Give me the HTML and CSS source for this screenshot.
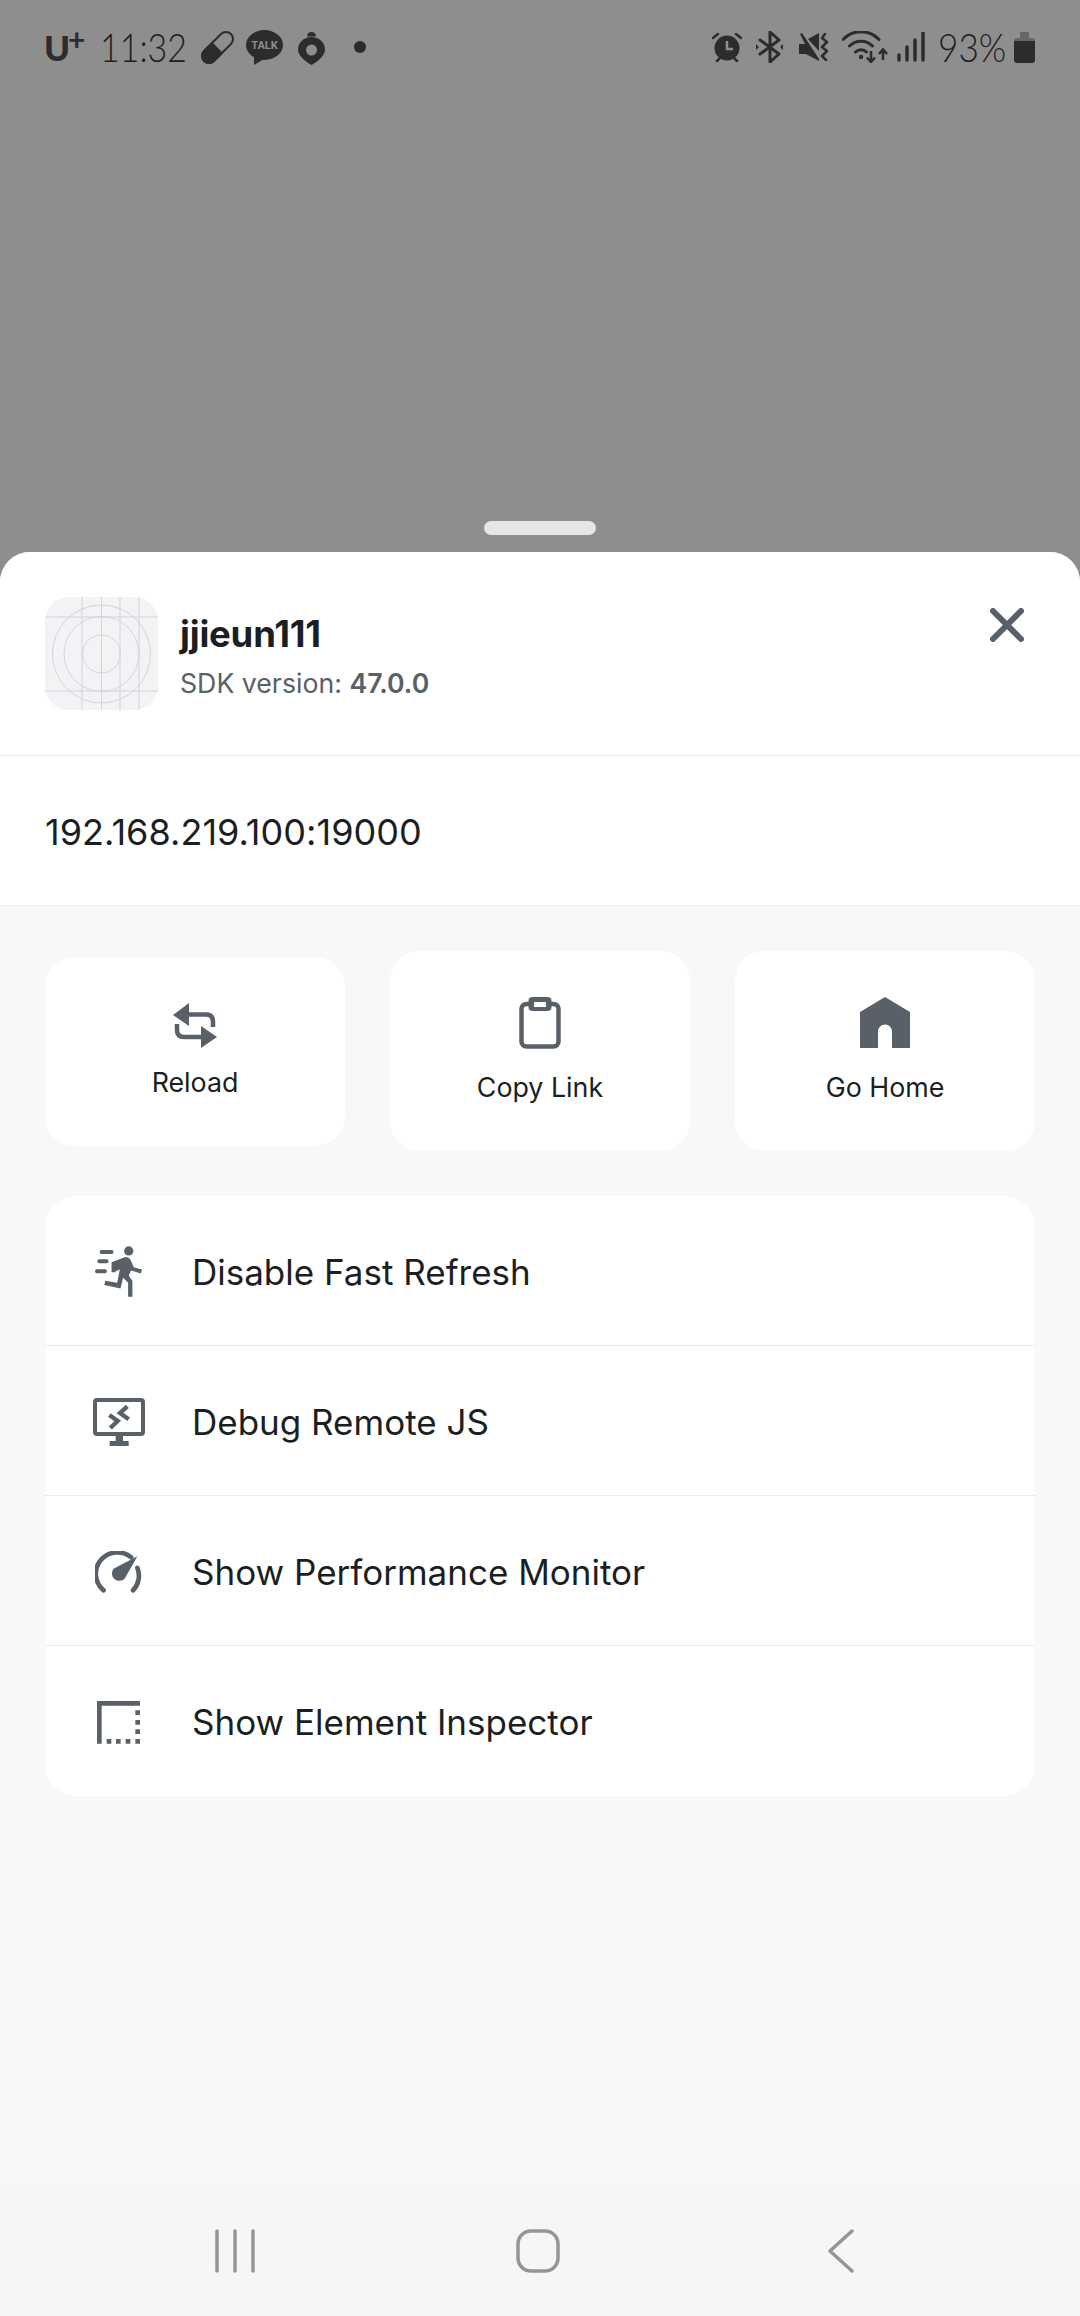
FILE: index.html
```html
<!DOCTYPE html>
<html lang="en">
<head>
  <meta charset="UTF-8">
  <title>jjieun111 - Dev Menu</title>
  <meta name="viewport" content="width=device-width,minimum-scale=1.0,maximum-scale=1.0">
  <link rel="stylesheet" href="styles.css">
</head>
<body>
  <div class="backdrop">
    <div class="status">
      <div class="status-left">
        <span class="carrier">U<sup>+</sup></span>
        <span class="clock">11:32</span>
        <svg class="st st-pill" width="33" height="33" viewBox="0 0 33 33">
          <g transform="rotate(-45 16.5 16.5)">
            <rect x="-2.5" y="9.5" width="38" height="14" rx="7" fill="none" stroke="#2c2c2c" stroke-width="2"/>
            <path d="M16.5 8.5H4.5a8 8 0 0 0 0 16h12z" fill="#2c2c2c"/>
          </g>
        </svg>
        <svg class="st st-talk" width="37" height="35" viewBox="0 0 37 35">
          <ellipse cx="18.5" cy="15" rx="18.5" ry="15" fill="#2c2c2c"/>
          <path d="M8 25l0 10 10-6z" fill="#2c2c2c"/>
          <text x="18.5" y="19" class="talk-text" text-anchor="middle">TALK</text>
        </svg>
        <svg class="st st-timer" width="27" height="35" viewBox="0 0 27 35">
          <path d="M9 6.5a4.500 4.500 0 0 1 9 0z" fill="#2c2c2c"/>
          <path d="M13.500 7C21 7 27 12.500 27 19.500 27 26 19 32 13.500 35 8 32 0 26 0 19.500 0 12.500 6 7 13.500 7z" fill="#2c2c2c"/>
          <circle cx="13.500" cy="20" r="5.500" fill="#8e8e8e"/>
        </svg>
        <span class="dot"></span>
      </div>
      <div class="status-right">
        <svg class="st st-alarm" width="30" height="30" viewBox="0 0 30 30">
          <circle cx="15" cy="16" r="12.500" fill="#2c2c2c"/>
          <path d="M1 6l5-4M29 6l-5-4M5 29l3-3M25 29l-3-3" stroke="#2c2c2c" stroke-width="2.500" stroke-linecap="round"/>
          <path d="M15 9v8h6" fill="none" stroke="#8e8e8e" stroke-width="2.500"/>
        </svg>
        <svg class="st st-bt" width="27" height="32" viewBox="0 0 27 32">
          <path d="M4 9l19 14-9 8V1l9 8L4 23" fill="none" stroke="#2c2c2c" stroke-width="3" stroke-linejoin="round" stroke-linecap="round"/>
          <path d="M0 13l3 3-3 3zM27 13l-3 3 3 3z" fill="#2c2c2c"/>
        </svg>
        <svg class="st st-mute" width="30" height="28" viewBox="0 0 30 28">
          <path d="M0 11h6l-5-10 2-1 17 26v2L7 21H0zM9 6l11-6v18z" fill="#2c2c2c"/>
          <path d="M26 1l-3 4 5 4-5 5 5 4-5 5 4 4" fill="none" stroke="#2c2c2c" stroke-width="2.500" stroke-linecap="round" stroke-linejoin="round"/>
        </svg>
        <svg class="st st-wifi" width="46" height="32" viewBox="0 0 46 32">
          <path d="M1 8.500C11-2 27-2 37 8.500M7.500 15C14 8.500 24 8.500 30.500 15M13.500 21c3-3 8-3 11 0" fill="none" stroke="#2c2c2c" stroke-width="3" stroke-linecap="round"/>
          <circle cx="19" cy="26" r="2.200" fill="#2c2c2c"/>
          <path d="M29 20v10M25 26.500l4 4.500 4-4.500M41 29V19M37 23l4-4.500 4 4.500" fill="none" stroke="#2c2c2c" stroke-width="2.500"/>
        </svg>
        <svg class="st st-signal" width="28" height="30" viewBox="0 0 28 30">
          <path d="M2 23v5M10 15v13M18 8v20M26 1v27" stroke="#2c2c2c" stroke-width="3.500" stroke-linecap="round"/>
        </svg>
        <span class="battery-pct">93%</span>
        <svg class="st-battery" width="21" height="31" viewBox="0 0 21 31">
          <path d="M6 0h9v6h3a3 3 0 0 1 3 3v3H0V9a3 3 0 0 1 3-3h3z" fill="#666"/>
          <path d="M0 9h21v19a3 3 0 0 1-3 3H3a3 3 0 0 1-3-3z" fill="#2c2c2c"/>
        </svg>
      </div>
    </div>
    <div class="handle"></div>
  </div>

  <div class="sheet">
    <div class="project">
      <svg class="avatar" width="113" height="113" viewBox="0 0 113 113">
        <rect width="113" height="113" rx="24" fill="#f3f3f6"/>
        <g fill="none" stroke="#d3d3d8" stroke-width="1">
          <path d="M37 0v113M56.500 0v113M75 0v113M94 0v113M0 20h113M0 94h113"/>
          <circle cx="56.500" cy="57" r="49"/>
          <circle cx="56.500" cy="57" r="37.500"/>
          <circle cx="56.500" cy="57" r="19"/>
        </g>
      </svg>
      <div class="project-info">
        <div class="project-name">jjieun111</div>
        <div class="project-sdk">SDK version: <b>47.0.0</b></div>
      </div>
      <svg class="close" width="34" height="34" viewBox="0 0 34 34">
        <path d="M3 3l28 28M31 3L3 31" stroke="#596068" stroke-width="6" stroke-linecap="round"/>
      </svg>
    </div>

    <div class="host">192.168.219.100:19000</div>

    <div class="content">
      <div class="actions">
        <div class="action action-reload">
          <svg class="action-icon" width="44" height="45" viewBox="0 0 44 45">
            <path d="M0 12L16 0v23zM44 34L28 23v22z" fill="#596068"/>
            <path d="M14 11.500h19q7 0 7 7V24M4 21v6q0 7 7 7h19" fill="none" stroke="#596068" stroke-width="4.500"/>
          </svg>
          <span>Reload</span>
        </div>
        <div class="action">
          <svg class="action-icon" width="42" height="52" viewBox="0 0 42 52">
            <rect x="2.500" y="7" width="37" height="42.500" rx="5" fill="none" stroke="#596068" stroke-width="4.500"/>
            <rect x="9.500" y="0" width="23" height="14" rx="4" fill="#596068"/>
            <rect x="15" y="5" width="12" height="5" fill="#fff"/>
          </svg>
          <span>Copy Link</span>
        </div>
        <div class="action">
          <svg class="action-icon" width="50" height="52" viewBox="0 0 50 52">
            <path d="M25 0l25 15v36H32V34.500a7 7 0 0 0-14 0V51H0V15z" fill="#596068"/>
          </svg>
          <span>Go Home</span>
        </div>
      </div>

      <div class="menu">
        <div class="menu-row">
          <div class="menu-icon">
            <svg width="47" height="52" viewBox="105 80 142 155">
              <circle cx="207" cy="94" r="14" fill="#596068"/>
              <path d="M155 128L197 112Q208 112 213 122L222 143L247 150L244 162L214 153L207 168L218 185V232H205V190L190 175L182 207L133 197L136 184L172 190L180 150L167 155V158H155z" fill="#596068"/>
              <path d="M125 97h30M118 125h22M111 155h24" stroke="#596068" stroke-width="12" stroke-linecap="round"/>
            </svg>
          </div>
          <span>Disable Fast Refresh</span>
        </div>
        <div class="menu-row">
          <div class="menu-icon">
            <svg width="52" height="48" viewBox="97 533 156 144">
              <rect x="103" y="539" width="144" height="102" rx="6" fill="none" stroke="#596068" stroke-width="12"/>
              <path d="M165 647h22v15h-22zM147 662h57v15h-57z" fill="#596068"/>
              <path d="M200 558l-22 20 26 19M146 584l25 18-22 21" fill="none" stroke="#596068" stroke-width="13"/>
            </svg>
          </div>
          <span>Debug Remote JS</span>
        </div>
        <div class="menu-row">
          <div class="menu-icon">
            <svg width="47" height="42" viewBox="105 90 142 125">
              <path d="M131 208A64 64 0 0 1 214 108M233 140A64 64 0 0 1 220 208" fill="none" stroke="#596068" stroke-width="14" stroke-linecap="round"/>
              <path d="M233 105L195 172A22 22 0 1 1 162 142z" fill="#596068"/>
            </svg>
          </div>
          <span>Show Performance Monitor</span>
        </div>
        <div class="menu-row">
          <div class="menu-icon">
            <svg width="43" height="43" viewBox="111 540 129 129">
              <path d="M111 540h129v14H125v114h-14z" fill="#596068"/>
              <path d="M226 568h14v14h-14zM226 597h14v14h-14zM226 625h14v14h-14zM226 654h14v14h-14zM197 654h14v14h-14zM168 654h14v14h-14zM140 654h14v14h-14z" fill="#596068"/>
            </svg>
          </div>
          <span>Show Element Inspector</span>
        </div>
      </div>
    </div>
  </div>

  <div class="navbar">
    <div class="nav-slot">
      <svg width="40" height="44" viewBox="0 0 40 44">
        <path d="M2 2v40M20 2v40M38 2v40" stroke="#959595" stroke-width="3.500" stroke-linecap="round"/>
      </svg>
    </div>
    <div class="nav-slot">
      <svg width="44" height="44" viewBox="0 0 44 44">
        <rect x="2" y="2" width="40" height="40" rx="13" fill="none" stroke="#959595" stroke-width="3.500"/>
      </svg>
    </div>
    <div class="nav-slot">
      <svg width="26" height="44" viewBox="0 0 26 44">
        <path d="M24 2L2 22l22 20" fill="none" stroke="#959595" stroke-width="3.500" stroke-linecap="round" stroke-linejoin="round"/>
      </svg>
    </div>
  </div>
</body>
</html>
```

FILE: styles.css
```css
* {
  box-sizing: border-box;
}
html,
body {
  margin: 0;
  padding: 0;
}
body {
  width: 1080px;
  height: 2316px;
  display: flex;
  flex-direction: column;
  overflow: hidden;
  font-family: Inter, "Noto Sans", sans-serif;
  color: #1b1f23;
  background-color: #8e8e8e;
}
svg {
  display: block;
}

/* status bar + dimmed area */
.backdrop {
  height: 552px;
  background-color: #8e8e8e;
  display: flex;
  flex-direction: column;
}
.status {
  height: 94px;
  padding: 0 45px 0 44px;
  display: flex;
  align-items: center;
  justify-content: space-between;
  color: #2c2c2c;
}
.status-left,
.status-right {
  display: flex;
  align-items: center;
}
.carrier {
  font-family: Lato, sans-serif;
  font-weight: 900;
  font-size: 35px;
  line-height: 38px;
  margin-right: 16px;
  width: 40px;
  white-space: nowrap;
}
.carrier sup {
  font-size: 30px;
  font-weight: 700;
  line-height: 0;
  vertical-align: 10px;
  margin-left: -2px;
}
.clock,
.battery-pct {
  font-family: Lato, sans-serif;
  font-weight: 300;
  font-size: 40px;
  line-height: 40px;
  transform-origin: left center;
  white-space: nowrap;
  color: #1e1e1e;
}
.clock {
  width: 85px;
  margin-right: 16px;
  transform: scaleX(0.85);
}
.st-pill {
  margin-right: 12px;
}
.st-talk {
  margin-right: 15px;
}
.st-timer {
  margin-right: 29px;
}
.talk-text {
  font-family: Roboto, sans-serif;
  font-weight: 700;
  font-size: 11px;
  fill: #8e8e8e;
}
.dot {
  width: 12px;
  height: 12px;
  border-radius: 50%;
  background-color: #2c2c2c;
}
.st-alarm {
  margin-right: 14px;
}
.st-bt {
  margin-right: 16px;
}
.st-mute {
  margin-right: 13px;
}
.st-wifi {
  margin-right: 9px;
}
.st-signal {
  margin-right: 13px;
}
.battery-pct {
  width: 68px;
  margin-right: 8px;
  transform: scaleX(0.88);
}
.handle {
  width: 112px;
  height: 14px;
  border-radius: 7px;
  margin: auto auto 17px;
  background-color: #e6e6e6;
}

/* sheet */
.sheet {
  flex: 1;
  border-radius: 30px 30px 0 0;
  overflow: hidden;
  background-color: #f8f8fa;
}
.project {
  height: 204px;
  padding: 45px 56px 0 45px;
  display: flex;
  align-items: flex-start;
  background-color: #fff;
  border-bottom: 1px solid #ebebee;
}
.avatar {
  flex: none;
  margin-right: 23px;
}
.project-info {
  flex: 1;
  padding-top: 14px;
  margin-left: -1px;
}
.project-name {
  font-size: 36.5px;
  line-height: 46px;
  font-weight: 700;
  letter-spacing: -0.2px;
}
.project-sdk {
  margin-top: 9px;
  font-size: 26.7px;
  line-height: 34px;
  color: #596068;
}
.project-sdk b {
  font-weight: 600;
}
.close {
  margin-top: 11px;
}
.host {
  height: 150px;
  padding: 2px 0 0 45px;
  display: flex;
  align-items: center;
  font-size: 36px;
  letter-spacing: 0.05px;
  background-color: #fff;
  border-bottom: 1px solid #ebebee;
}
.content {
  padding: 45px;
}
.actions {
  display: flex;
  align-items: center;
  gap: 45px;
}
.action {
  width: 300px;
  padding: 46px 0 43px;
  border-radius: 30px;
  display: flex;
  flex-direction: column;
  align-items: center;
  font-size: 26.8px;
  line-height: 41px;
  background-color: #fff;
}
.action-icon {
  margin-bottom: 18px;
}
.action-reload .action-icon {
  margin-bottom: 14px;
}
.menu {
  margin-top: 45px;
  border-radius: 30px;
  overflow: hidden;
  background-color: #fff;
}
.menu-row {
  height: 150px;
  padding-top: 2px;
  display: flex;
  align-items: center;
  font-size: 35px;
  border-bottom: 1px solid #ebebee;
}
.menu-row:last-child {
  border-bottom: none;
}
.menu-icon {
  flex: none;
  width: 147px;
  display: flex;
  justify-content: center;
}

/* android nav */
.navbar {
  flex: none;
  height: 134px;
  padding: 4px 4px 0 0;
  display: flex;
  align-items: center;
  justify-content: center;
  background-color: #f6f6f6;
}
.nav-slot {
  width: 303px;
  display: flex;
  justify-content: center;
}
```
